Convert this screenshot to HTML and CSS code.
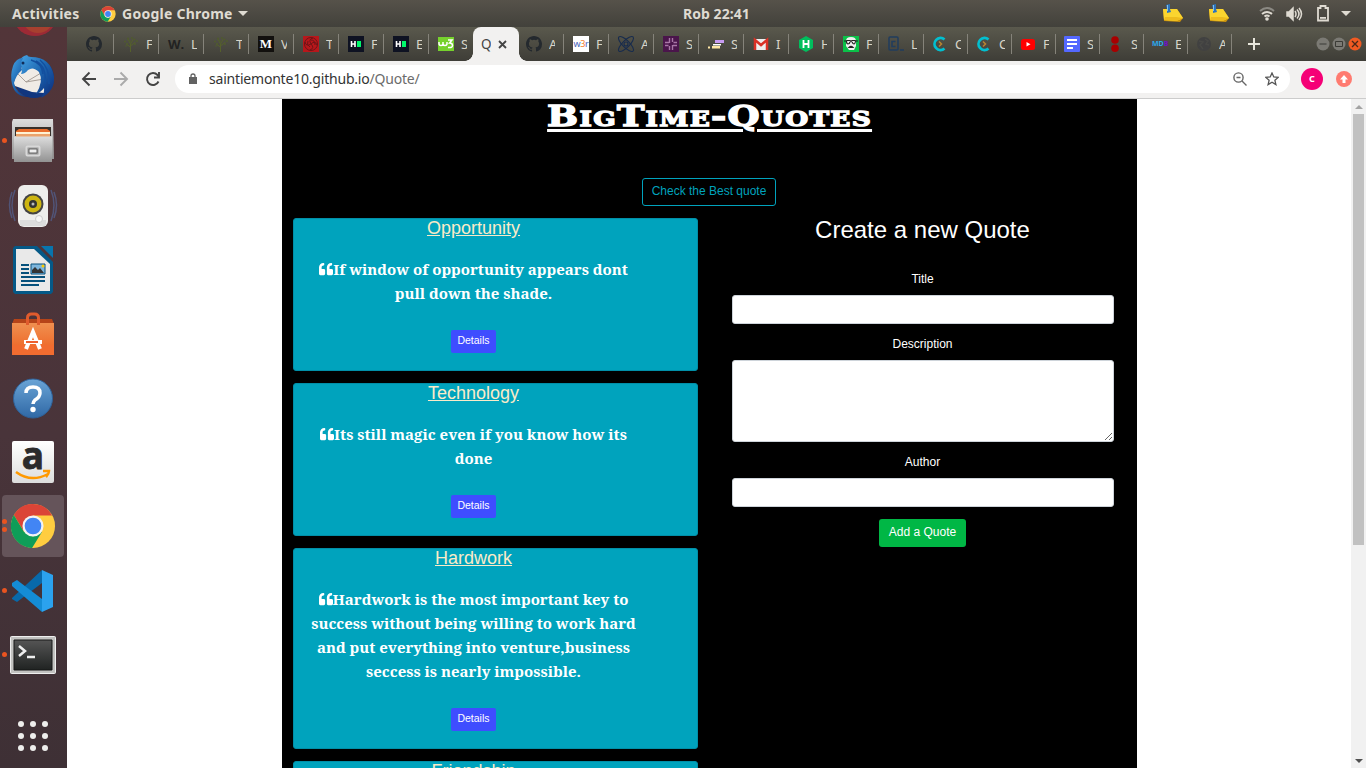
FILE: index.html
```html
<!DOCTYPE html>
<html lang="en">
<head>
<meta charset="utf-8">
<title>Quote</title>
<link rel="stylesheet" href="styles.css">
</head>
<body>
<svg class="defs" width="0" height="0">
  <defs>
    <linearGradient id="silver" x2="0" y2="1"><stop stop-color="#ddd"/><stop offset="1" stop-color="#929292"/></linearGradient>
    <linearGradient id="bird" x2="1" y2="1"><stop stop-color="#45a5e5"/><stop offset=".5" stop-color="#1c63ae"/><stop offset="1" stop-color="#0b2a78"/></linearGradient>
    <linearGradient id="bag" x2="0" y2="1"><stop stop-color="#f09050"/><stop offset="1" stop-color="#ee6020"/></linearGradient>
    <linearGradient id="help" x2="0" y2="1"><stop stop-color="#6aa4d6"/><stop offset="1" stop-color="#2f68a5"/></linearGradient>
    <linearGradient id="term" x2="0" y2="1"><stop stop-color="#555"/><stop offset="1" stop-color="#202322"/></linearGradient>
    <symbol id="chrome" viewBox="0 0 48 48">
      <circle cx="24" cy="24" r="23" fill="#ffcd40"/>
      <path d="M4 12.500A23 23 0 0 1 44 13H24L14 29Z" fill="#db4437"/>
      <path d="M4 12.500A23 23 0 0 0 23 47L33.500 30 24 35 14.500 30Z" fill="#0f9d58"/>
      <circle cx="24" cy="24" r="11" fill="#f3f3f3"/><circle cx="24" cy="24" r="8.700" fill="#4285f4"/>
    </symbol>
    <symbol id="github" viewBox="0 0 16 16"><path fill="#24292e" d="M8 0C3.580 0 0 3.580 0 8c0 3.540 2.290 6.530 5.470 7.590.4.070.550-.170.550-.380 0-.190-.010-.820-.010-1.490-2.010.370-2.530-.490-2.690-.940-.090-.230-.480-.940-.820-1.130-.280-.150-.680-.520-.010-.530.630-.010 1.080.580 1.230.820.720 1.210 1.870.870 2.330.660.070-.520.280-.870.510-1.070-1.780-.200-3.640-.890-3.640-3.950 0-.870.310-1.590.820-2.150-.080-.200-.360-1.020.080-2.120 0 0 .670-.210 2.200.820a7.600 7.600 0 0 1 4 0c1.530-1.040 2.200-.820 2.200-.820.440 1.100.160 1.920.080 2.120.510.560.820 1.270.820 2.150 0 3.070-1.870 3.750-3.650 3.950.290.250.540.730.540 1.480 0 1.070-.010 1.930-.010 2.200 0 .210.150.460.550.380A8 8 0 0 0 16 8c0-4.420-3.580-8-8-8z"/></symbol>
    <symbol id="tree" viewBox="0 0 16 16"><path d="M7.500 16V8M7.500 11L3 8M7.500 10l5-4M7.500 8L5 3M7.500 8l3-5" stroke="#55602b" fill="none"/><g fill="#505b30"><circle cx="2" cy="5.500" r="1.100"/><circle cx="5" cy="2.500" r="1.100"/><circle cx="9" cy="2" r="1.100"/><circle cx="11.500" cy="3.500" r="1"/><circle cx="14" cy="5" r="1.100"/><circle cx="7" cy="5" r="1.100"/><circle cx="12" cy="8" r="1.100"/><circle cx="4" cy="8" r="1.100"/><circle cx="3" cy="10" r=".8"/></g></symbol>
    <symbol id="hd" viewBox="0 0 16 16"><path fill="#0e1222" d="M0 0h16v16H0z"/><path d="M3.500 5v6M7 5v6M3.500 8H7" stroke="#fff" stroke-width="1.600"/><path fill="#00f86b" d="M9 5h4v6H9z"/></symbol>
    <symbol id="ring" viewBox="0 0 16 16"><path d="M12.500 3.500A6 6 0 1 0 12.500 12.500" fill="none" stroke="#02bfd0" stroke-width="2.800"/><path d="M7 5.500L9.500 8 7 10.500" fill="none" stroke="#b98431" stroke-width="1.500"/></symbol>
    <symbol id="note" viewBox="0 0 22 20"><path d="M1 6l14-1 6 9-3 4-16-1z" fill="#c9920e"/><path d="M1 5l14 0 6 9q-4 2-7 3L2 16z" fill="#fbd52f"/><path d="M3 13l11 0 7 1-6 3-13-1z" fill="#eebc1d"/><path d="M4 1l4-1 0 5 1 3-4 1 0-4z" fill="#2b73bd"/><path d="M5.500 1v6" stroke="#7ec0ee"/></symbol>
    <symbol id="quote" viewBox="0 0 512 512"><path fill="#fff" d="M464 256h-80v-64c0-35.300 28.700-64 64-64h8c13.300 0 24-10.700 24-24V56c0-13.300-10.700-24-24-24h-8c-88.400 0-160 71.600-160 160v240c0 26.500 21.500 48 48 48h128c26.500 0 48-21.500 48-48V304c0-26.500-21.500-48-48-48zm-288 0H96v-64c0-35.300 28.700-64 64-64h8c13.300 0 24-10.700 24-24V56c0-13.300-10.700-24-24-24h-8C71.600 32 0 103.600 0 192v240c0 26.500 21.500 48 48 48h128c26.500 0 48-21.500 48-48V304c0-26.500-21.500-48-48-48z"/></symbol>
  </defs>
</svg>

<div class="desktop">
  <header class="topbar">
    <span class="activities">Activities</span>
    <svg class="app-icon" width="16" height="16"><use href="#chrome"/></svg>
    <span class="app-name">Google Chrome</span>
    <i class="caret"></i>
    <span class="clock">Rob 22:41</span>
    <div class="tray">
      <svg width="22" height="20"><use href="#note"/></svg>
      <svg class="note-two" width="22" height="20"><use href="#note"/></svg>
      <svg class="wifi" width="16" height="16" fill="none" stroke-width="2"><path d="M1 5Q8 -1 15 5" stroke="#8b8983"/><path d="M3 8q5-4 10 0M5.500 10.500q2.500-2 5 0" stroke="#dfdbd2"/><circle cx="8" cy="13" r="1.800" fill="#dfdbd2"/></svg>
      <svg class="volume" width="17" height="16" fill="none" stroke="#dfdbd2" stroke-width="1.500"><path d="M1 6h2l4-4v12l-4-4H1z" fill="#dfdbd2"/><path d="M9 5q2 3 0 6M11 3.500q4 4.500 0 9M13 2q5 6 0 12"/></svg>
      <svg class="battery" width="12" height="17"><path d="M3.500 3V1h5v2H11v12.500H1V3z" fill="none" stroke="#dfdbd2" stroke-width="1.800"/><path d="M3 12h6v1.800H3z" fill="#dfdbd2"/></svg>
      <i class="caret"></i>
    </div>
  </header>

  <div class="workspace">
    <nav class="dock">
      <div class="slot slot-first"><svg width="42" height="9"><ellipse cx="23" cy="-7" rx="20" ry="16" fill="#9c2a35"/><ellipse cx="26" cy="-8" rx="15" ry="14" fill="#a7402f"/></svg></div>
      <div class="slot"><svg width="48" height="48" viewBox="0 0 48 48">
        <circle cx="25" cy="25" r="20" fill="#10367f"/>
        <path d="M4 31l6-16 20-5 9 9-4 21-12-1-17-6z" fill="#f0ece6"/><path d="M9 21l8 8 15-9M17 29l18-3" fill="none" stroke="#aaa199"/>
        <path d="M12 13Q8 5 18 2q1 2 4 2 20 0 23 20 1 14-13 21 4-6 3-10-4 5-8 6 8-13 3-22-6-6-11-2-3 4-7 4 2-4 0-8" fill="url(#bird)"/>
        <path d="M4 13q3-8 10-8-3 5-1 12-6 5-8 13 2 11 15 14-14 0-17-13-2-9 1-18z" fill="url(#bird)"/>
        <path d="M27 8q11 6 9 23M31 7q10 8 9 24M22 7q11 3 12 14" fill="none" stroke="#134f9f" stroke-width="1.500"/><circle cx="14" cy="10" r="1.500" fill="#102d59"/>
      </svg></div>
      <div class="slot running"><svg width="44" height="46" viewBox="0 0 44 46">
        <path d="M2 1h40l1 40H1V4z" fill="url(#silver)"/><path d="M4 9h36v9H4z" fill="#37302b"/><path d="M5 13l3-2h28l3 2v6H5z" fill="#e96d2c"/><path d="M5 14h34v2H5z" fill="#fff1d2"/><path d="M5 16h34v3H5z" fill="#eba36b"/><path d="M3 18.500h38V44H3z" fill="url(#silver)"/><rect x="15.500" y="28.500" width="13" height="9" rx="1" fill="#999" stroke="#d8d8d8" stroke-width="2"/><path d="M18 31h8v4h-8z" fill="#eee" stroke="#666"/>
      </svg></div>
      <div class="slot"><svg width="50" height="46" viewBox="0 0 50 46">
        <path d="M7 8q-6 15 0 31M4 10q-5 13 0 26M43 8q6 15 0 31M46 10q5 13 0 26" fill="none" stroke="#515477" stroke-width="1.500"/>
        <rect x="10" y="3" width="30" height="42" rx="6" fill="#eeeeec"/><path d="M12 38h26v5q0 1-2 1H14q-2 0-2-1z" fill="#ddd"/><circle cx="25" cy="22" r="10.500" fill="#444"/><circle cx="25" cy="22" r="8.500" fill="#cdb511"/><circle cx="25" cy="22" r="4" fill="#333"/><circle cx="25" cy="22" r="1.500" fill="#bbb"/><circle cx="31" cy="37" r="3.500" fill="#f7f7f7" stroke="#ccc"/>
      </svg></div>
      <div class="slot"><svg width="40" height="48" viewBox="0 0 40 48">
        <path d="M2 0h22l16 16v30l-2 2H2l-2-2V2z" fill="#055987"/><path d="M3 3h18l16 15v27H3z" fill="#e9e9e9"/><path d="M28 0h12v12z" fill="#0875ad"/><path d="M8 19h8M8 23h8M8 27h8M8 31h24M8 35h24M8 39h18" stroke="#06517c" stroke-width="2"/><path d="M18 18h14v10H18z" fill="#7eb6dc" stroke="#06517c"/><path d="M19 27v-3l3-3 3 3 2-2 4 5z" fill="#333"/><circle cx="30" cy="20" r="1.500" fill="#fc0"/>
      </svg></div>
      <div class="slot"><svg width="42" height="45" viewBox="0 0 42 45">
        <path d="M2 8h38l2 5H0z" fill="#b64419"/><path d="M0 12h42v32H0z" fill="url(#bag)"/><path d="M0 34h42v10H0z" fill="#f26c30"/><path d="M15.500 14V7q0-4 4-4h3q4 0 4 4v7" fill="none" stroke="#e05b2d" stroke-width="3"/><path d="M14 38l7-17 7 17" fill="none" stroke="#fff" stroke-width="4"/><path d="M12 31h18" stroke="#fff" stroke-width="4"/><path d="M14 31h12" stroke="#ee6030" stroke-width="2"/>
      </svg></div>
      <div class="slot"><svg width="42" height="42" viewBox="0 0 42 42">
        <circle cx="21" cy="21.500" r="19.500" fill="url(#help)" stroke="#2e6199"/><path d="M14 16q0-6 7-6t7 6q0 4-5 7-2 2-2 4" fill="none" stroke="#fff" stroke-width="3.500"/><circle cx="21" cy="32.500" r="2.700" fill="#fff"/>
      </svg></div>
      <div class="slot"><div class="amazon"><b>a</b><svg width="40" height="12" fill="none" stroke="#f90" stroke-width="2.500"><path d="M3 3q15 11 32 2M30 2h6q0 3-3 6"/></svg></div></div>
      <div class="slot running active twin"><svg width="46" height="46"><use href="#chrome"/></svg></div>
      <div class="slot running"><svg width="44" height="44" viewBox="0 0 44 44">
        <path d="M1 29L31 1v13L6 33l-5-3z" fill="#0869aa"/><path d="M1 14l5-3 25 19v13L1 17z" fill="#148cd5"/><path d="M31 1l11 5v32l-11 5z" fill="#2ba2ee"/>
      </svg></div>
      <div class="slot running"><svg width="46" height="40" viewBox="0 0 46 40">
        <rect x=".5" y="1.500" width="45" height="37" rx="1" fill="#c2c2c0" stroke="#eee"/><path d="M4 5h38v30H4z" fill="url(#term)" stroke="#161616"/><path d="M9 11l6 5-6 5M17 22h8" fill="none" stroke="#eee" stroke-width="2.500"/>
      </svg></div>
      <div class="slot grid"><svg width="32" height="32" fill="#eeeeec"><circle cx="4" cy="4" r="3"/><circle cx="16" cy="4" r="3"/><circle cx="28" cy="4" r="3"/><circle cx="4" cy="16" r="3"/><circle cx="16" cy="16" r="3"/><circle cx="28" cy="16" r="3"/><circle cx="4" cy="28" r="3"/><circle cx="16" cy="28" r="3"/><circle cx="28" cy="28" r="3"/></svg></div>
    </nav>

    <main class="browser">
      <div class="tabs">
        <div class="tab tab-first"><svg><use href="#github"/></svg></div>
        <div class="tab"><svg><use href="#tree"/></svg><span>F</span></div>
        <div class="tab"><b class="fav w-dot">W.</b><span>L</span></div>
        <div class="tab"><svg><use href="#tree"/></svg><span>T</span></div>
        <div class="tab"><b class="fav medium">M</b><span>V</span></div>
        <div class="tab"><svg><path fill="#b7171b" d="M0 0h16v16H0z"/><g fill="none" stroke="#6d1417"><circle cx="8" cy="8" r="6.500"/><path d="M8 8q-3-5 2-6M8 8q4-4 6 1M8 8q4 4-1 6M8 8q-5 3-6-2M5 5q-2 4 2 6M8 4q4 0 4 5"/></g></svg><span>T</span></div>
        <div class="tab"><svg><use href="#hd"/></svg><span>F</span></div>
        <div class="tab"><svg><use href="#hd"/></svg><span>E</span></div>
        <div class="tab no-line"><svg><path fill="#76d22d" d="M0 1h16v14H0z"/><path d="M1 6v1.500q0 2 2 2t2-2V6v1.500q0 2 2 2t2-2V6M10 4h4l-2.500 3q3 0 3 2.500t-4.500 2" fill="none" stroke="#fff" stroke-width="1.500"/></svg><span>S</span></div>
        <div class="tab current"><span>Q</span><svg class="close"><path d="M1 1l7 7M8 1L1 8" stroke="#444" stroke-width="1.800"/></svg></div>
        <div class="tab after"><svg><use href="#github"/></svg><span>A</span></div>
        <div class="tab"><b class="fav w3r">w<em>3</em>r</b><span>F</span></div>
        <div class="tab"><svg fill="none" stroke="#172b4d" stroke-width="1.100"><ellipse cx="8" cy="8" rx="10" ry="3.500" transform="rotate(45 8 8)"/><ellipse cx="8" cy="8" rx="10" ry="3.500" transform="rotate(-45 8 8)"/><circle cx="8" cy="8" r="2"/></svg><span>A</span></div>
        <div class="tab"><svg><path fill="#4a154b" d="M0 0h16v16H0z"/><path d="M6.500 2v5M2 6.500h4M9.500 2v4M10.500 6.500H14M2 9.500h3.500M6.500 10v4M9.500 9v5M10 9.500h4" stroke="#a876a6" stroke-width="1.400"/></svg><span>S</span></div>
        <div class="tab"><svg><path d="M7 4h9v3H7z" fill="#c79bf2"/><path d="M5 8h8v1.500H5z" fill="#fff"/><path d="M4 10h8v2.500H4zM0 10.500h2v2H0z" fill="#ffe7a5"/></svg><span>S</span></div>
        <div class="tab"><svg><path fill="#eee" d="M1 3h14v11H1z"/><path d="M2 14V4l6 5 6-5v10" fill="none" stroke="#da3025" stroke-width="2.500"/></svg><span>I</span></div>
        <div class="tab"><svg><path d="M8 0l7 4v8l-7 4-7-4V4z" fill="#00bf5d"/><path d="M5.500 4v8M10.500 4v8M5 8h6" stroke="#fff" stroke-width="1.800"/></svg><span>H</span></div>
        <div class="tab"><svg><path fill="#0bc149" d="M0 0h16v16H0z"/><path d="M3 5q0-4 5-4 5 0 5 4v5l-2 4H6l-3-4z" fill="#eee"/><path d="M1 5h2l1-.5h3l1 1 1-1h3l1 .5h2M3.500 5q0 3 1.500 3t2-2M9 6q1 2 2 2t1.500-3M6 11.500q2-2 4 0z" fill="none" stroke="#222" stroke-width="1.200"/></svg><span>F</span></div>
        <div class="tab"><svg fill="none" stroke="#213d5d" stroke-width="1.500"><rect x="1" y="1" width="9" height="13" rx="1"/><path d="M7.500 5.500H4v5h3.500M12 14h4"/></svg><span>L</span></div>
        <div class="tab narrow"><svg><use href="#ring"/></svg><span>C</span></div>
        <div class="tab narrow"><svg><use href="#ring"/></svg><span>C</span></div>
        <div class="tab narrow"><svg><rect x="1" y="3" width="14" height="11" rx="2.500" fill="#f00"/><path d="M6.500 6l4 2.300-4 2.200z" fill="#fff"/></svg><span>F</span></div>
        <div class="tab narrow"><svg><rect width="16" height="16" rx="1" fill="#5468ff"/><path d="M3 4h10M3 8h10M3 12h6" stroke="#fff" stroke-width="2"/></svg><span>S</span></div>
        <div class="tab narrow"><svg fill="#a80000"><circle cx="7" cy="4" r="3.800"/><circle cx="7" cy="12.200" r="3.800"/></svg><span>S</span></div>
        <div class="tab narrow"><b class="fav mdb">MD<em>B</em></b><span>E</span></div>
        <div class="tab narrow"><svg><circle cx="8" cy="8" r="7" fill="#414141"/><path d="M3 5l4 1-3 3 3 4M9 3l3 2-2 3 3 1" fill="none" stroke="#494946" stroke-width="1.500"/></svg><span>A</span></div>
        <svg class="plus"><path d="M6 0v12M0 6h12" stroke="#e8e6dc" stroke-width="2"/></svg>
        <div class="window-buttons">
          <svg viewBox="0 0 14 14"><circle cx="7" cy="7" r="6.500" fill="#7b7a74"/><path d="M3.500 7h7" stroke="#3b3b36"/></svg>
          <svg viewBox="0 0 14 14"><circle cx="7" cy="7" r="6.500" fill="#7b7a74"/><path d="M3.500 4.500h7v5h-7z" fill="none" stroke="#3b3b36"/></svg>
          <svg viewBox="0 0 14 14"><circle cx="7" cy="7" r="6.500" fill="#f05a22"/><path d="M4 4l6 6M10 4l-6 6" stroke="#4a2818" stroke-width="1.300"/></svg>
        </div>
      </div>

      <div class="toolbar">
        <svg class="arrow" viewBox="0 0 14 14" fill="none" stroke="#444" stroke-width="1.900"><path d="M14 7H1M7.500 .5L1 7l6.500 6.500"/></svg>
        <svg class="arrow" viewBox="0 0 14 14" fill="none" stroke="#aaa" stroke-width="1.900"><path d="M0 7h13M6.500 .5L13 7l-6.500 6.500"/></svg>
        <svg class="arrow" viewBox="0 0 14 14" fill="none" stroke="#444" stroke-width="1.900"><path d="M12.500 9.500A6 6 0 1 1 11.500 3L13 4.500M13 0v5.500H8"/></svg>
        <div class="address">
          <svg width="8" height="12"><path d="M0 4h8v7H0z" fill="#626262"/><path d="M2 4V3q0-2 2-2t2 2v1" fill="none" stroke="#626262" stroke-width="1.300"/></svg>
          <span class="url">saintiemonte10.github.io<em>/Quote/</em></span>
          <svg class="lens" width="14" height="14" fill="none" stroke="#666" stroke-width="1.400"><circle cx="5.500" cy="5.500" r="4.600"/><path d="M3.500 5.500h4M9 9l4.500 4.500"/></svg>
          <svg class="star" width="14" height="14"><path d="M7 1l1.800 4 4.400.4-3.300 2.900 1 4.300L7 10.300l-3.900 2.300 1-4.300L.8 5.400 5.200 5z" fill="none" stroke="#555" stroke-width="1.300"/></svg>
        </div>
        <span class="avatar">C</span>
        <svg class="update" width="16" height="16"><circle cx="8" cy="8" r="8" fill="#ff7b70"/><path d="M8 4l4 4.500H9.500V12h-3V8.500H4z" fill="#fff"/></svg>
      </div>

      <div class="viewport">
        <div class="page">
          <h1>BigTime-Quotes</h1>
          <a class="best">Check the Best quote</a>
          <div class="columns">
            <section class="quotes">
              <article class="card"><h2>Opportunity</h2><p><svg><use href="#quote"/></svg>If window of opportunity appears dont<br>pull down the shade.</p><a class="details">Details</a></article>
              <article class="card"><h2>Technology</h2><p><svg><use href="#quote"/></svg>Its still magic even if you know how its<br>done</p><a class="details">Details</a></article>
              <article class="card"><h2>Hardwork</h2><p><svg><use href="#quote"/></svg>Hardwork is the most important key to<br>success without being willing to work hard<br>and put everything into venture,business<br>seccess is nearly impossible.</p><a class="details">Details</a></article>
              <article class="card"><h2>Friendship</h2></article>
            </section>
            <form class="create">
              <h3>Create a new Quote</h3>
              <label>Title</label><input type="text">
              <label>Description</label><textarea></textarea>
              <label>Author</label><input type="text">
              <button type="button">Add a Quote</button>
            </form>
          </div>
        </div>
        <div class="scrollbar"><i class="up"></i><div class="thumb"></div><i class="down"></i></div>
      </div>
    </main>
  </div>
</div>
</body>
</html>
```
FILE: styles.css
```css
* { box-sizing: border-box; }
body { margin: 0; overflow: hidden; font-family: "Liberation Sans", Arial, sans-serif; }
svg { display: block; flex: none; }
.defs { position: absolute; }
.desktop { width: 1366px; height: 768px; display: flex; flex-direction: column; overflow: hidden; }

.topbar { height: 27px; flex: none; display: flex; align-items: center; background: linear-gradient(#56524a, #42413b); color: #dfdbd2; font: bold 14px/26px "Noto Sans", sans-serif; white-space: nowrap; }
.activities { width: 88px; padding-left: 12px; letter-spacing: .25px; }
.app-icon { margin-left: 12px; }
.app-name { width: 116px; padding-left: 6px; letter-spacing: .25px; }
.caret { width: 0; height: 0; border: 5px solid transparent; border-top-color: #dfdbd2; border-bottom: 0; flex: none; }
.app-name + .caret { margin-left: 6px; }
.clock { margin-left: 435px; width: 80px; letter-spacing: .05px; }
.tray { margin-left: auto; padding-right: 15px; display: flex; align-items: center; }
.note-two { margin-left: 24px; }
.wifi { margin-left: 29px; }
.volume { margin-left: 11px; }
.battery { margin-left: 14px; }
.tray .caret { margin-left: 12px; }

.workspace { flex: 1; min-height: 0; display: flex; }
.dock { width: 67px; flex: none; background: linear-gradient(#523539, #49343a 55%, #3e3035); }
.slot { width: 62px; height: 62px; margin: 0 2px 2.200px; display: flex; align-items: center; justify-content: center; position: relative; border-radius: 4px; }
.slot-first { height: 17px; align-items: flex-start; margin-bottom: 2px; }
.running::before { content: ""; position: absolute; left: 0; top: 28px; width: 5px; height: 5px; border-radius: 50%; background: #e95420; }
.twin::before { top: 24px; box-shadow: 0 8px #e95420; }
.active { background: #65545a; }
.grid { margin-top: 19px; }
.amazon { width: 42px; height: 42px; background: linear-gradient(#fff, #ddd); border-radius: 2px; display: flex; flex-direction: column; align-items: center; }
.amazon b { font: bold 37px/28px "Open Sans", sans-serif; color: #2b2b2b; -webkit-text-stroke: .8px #2b2b2b; }

.browser { flex: 1; min-width: 0; display: flex; flex-direction: column; }
.tabs { height: 34px; flex: none; display: flex; align-items: center; background: linear-gradient(#5a594d, #3e3d37); }
.tab { width: 45px; height: 20px; flex: none; display: flex; align-items: center; padding-left: 9px; border-right: 1px solid #85837a; }
.tab svg { width: 16px; height: 16px; overflow: visible; }
.tab span { width: 6px; margin-left: 7px; overflow: hidden; font: 13px/16px "Noto Sans", sans-serif; color: #d9d5c9; }
.tab-first { width: 47px; padding-left: 19px; }
.tab.no-line { width: 45px; border: 0; }
.tab.narrow { width: 44px; padding-left: 8px; }
.tab.after { width: 45px; padding-left: 7px; }
.tab.current { position: relative; width: 46px; height: 34px; margin-left: -1px; border: 0; border-radius: 8px 8px 0 0; background: #f2f1f0; padding-left: 8px; }
.tab.current::before, .tab.current::after { content: ""; position: absolute; bottom: 0; width: 8px; height: 8px; }
.tab.current::before { left: -8px; background: radial-gradient(circle at 0 0, transparent 7.500px, #f2f1f0 8px); }
.tab.current::after { right: -8px; background: radial-gradient(circle at 100% 0, transparent 7.500px, #f2f1f0 8px); }
.tab.current span { width: 10px; margin: 0; font-size: 13.500px; color: #444; }
.tab .close { width: 9px; height: 9px; margin-left: 7px; }
.fav { width: 16px; height: 16px; flex: none; text-align: center; font: bold 13px/16px "Open Sans", sans-serif; color: #222; }
.fav em { font-style: normal; }
.medium { background: #12100e; color: #fff; font-family: "Liberation Serif", serif; }
.w3r { background: #fff; color: #4a63b8; font: 9px/15px "Noto Sans", sans-serif; letter-spacing: -.3px; }
.w3r em { color: #f47b2a; }
.mdb { font: bold 7px/16px "Noto Sans", sans-serif; color: #29a9ed; }
.mdb em { color: #7010c8; }
.plus { width: 12px; height: 12px; margin-left: 16px; }
.window-buttons { margin-left: auto; padding-right: 4px; display: flex; gap: 2px; }
.window-buttons svg { width: 14px; height: 14px; }

.toolbar { height: 38px; flex: none; display: flex; align-items: center; padding: 0 14px 1px 15px; background: #f2f1f0; border-bottom: 1px solid #ccc; }
.arrow { width: 14px; height: 14px; margin-right: 18px; overflow: visible; }
.address { width: 1115px; height: 28px; margin-left: -3px; display: flex; align-items: center; padding: 0 11px 0 14px; border-radius: 14px; background: #fff; }
.url { margin-left: 12px; font: 14px/20px "Noto Sans", sans-serif; color: #333; letter-spacing: -.2px; }
.url em { font-style: normal; color: #6b6b6b; }
.lens { margin-left: auto; }
.star { margin-left: 18px; }
.avatar { width: 22px; height: 22px; margin-left: 11px; border-radius: 50%; background: #f50076; color: #fff; font: bold 9px/22px "Noto Sans", sans-serif; text-align: center; }
.update { margin-left: 13px; }

.viewport { flex: 1; min-height: 0; display: flex; justify-content: flex-end; background: #fff; overflow: hidden; }
.page { width: 855px; margin-right: 214px; height: 669px; overflow: hidden; background: #000; display: flex; flex-direction: column; align-items: center; }
h1, h2, h3, p { margin: 0; font-weight: normal; }
h1 { height: 79px; flex: none; color: #fff; font: bold 28px/35px "DejaVu Serif", serif; font-variant: small-caps; letter-spacing: 1px; text-decoration: underline; text-decoration-thickness: 3px; text-underline-offset: 3px; -webkit-text-stroke: 1.300px #fff; white-space: nowrap; transform: scaleX(1.315); }
.best { flex: none; width: 134px; height: 28px; margin-right: 1px; border: 1px solid #00a3bd; border-radius: 3px; color: #00a3bd; font-size: 12px; line-height: 25px; text-align: center; }
.columns { width: 855px; display: flex; padding: 12px 0 0 11px; }
.quotes { width: 405px; display: flex; flex-direction: column; gap: 12px; }
.card { border: 1px solid #008fa8; border-radius: 3px; background: #00a3bd; padding: 0 44px 17px 0; display: flex; flex-direction: column; align-items: center; }
.card h2 { height: 38px; font-size: 18px; line-height: 19px; color: #faebc8; text-decoration: underline; }
.card p { color: #fff; font: bold 15px/24px "Noto Serif", "DejaVu Serif Condensed", serif; text-align: center; white-space: nowrap; }
.card p svg { display: inline-block; width: 14px; height: 14px; vertical-align: -1px; }
.details { width: 45px; height: 23px; margin-top: 25px; border-radius: 2px; background: #3f4dff; color: #fff; font-size: 10.500px; line-height: 21px; text-align: center; }
.create { width: 382px; margin-left: 34px; display: flex; flex-direction: column; align-items: center; color: #fff; }
.create h3 { font-size: 24px; line-height: 24px; height: 52px; margin-right: 1px; }
.create label { font-size: 12px; line-height: 18px; margin-bottom: 7px; margin-right: 1px; }
.create input, .create textarea { width: 382px; height: 29px; margin: 0 0 11px; border: 1px solid #ced4da; border-radius: 3px; background: #fff; }
.create textarea { height: 82px; }
.create button { width: 87px; height: 28px; margin: 1px 1px 0 0; padding: 0 0 2px; border: 0; border-radius: 3px; background: #00b745; color: #fff; font: 12px "Liberation Sans", sans-serif; }
.scrollbar { width: 15px; background: #f1f1f1; display: flex; flex-direction: column; align-items: center; padding: 6px 0 5px; }
.scrollbar i { border: 4px solid transparent; }
.up { border-top: 0 !important; border-bottom-color: #a3a3a3 !important; }
.down { border-bottom: 0 !important; border-top-color: #505050 !important; margin-top: auto; }
.thumb { width: 11px; height: 431px; margin-top: 5px; background: #c1c1c1; }
```
